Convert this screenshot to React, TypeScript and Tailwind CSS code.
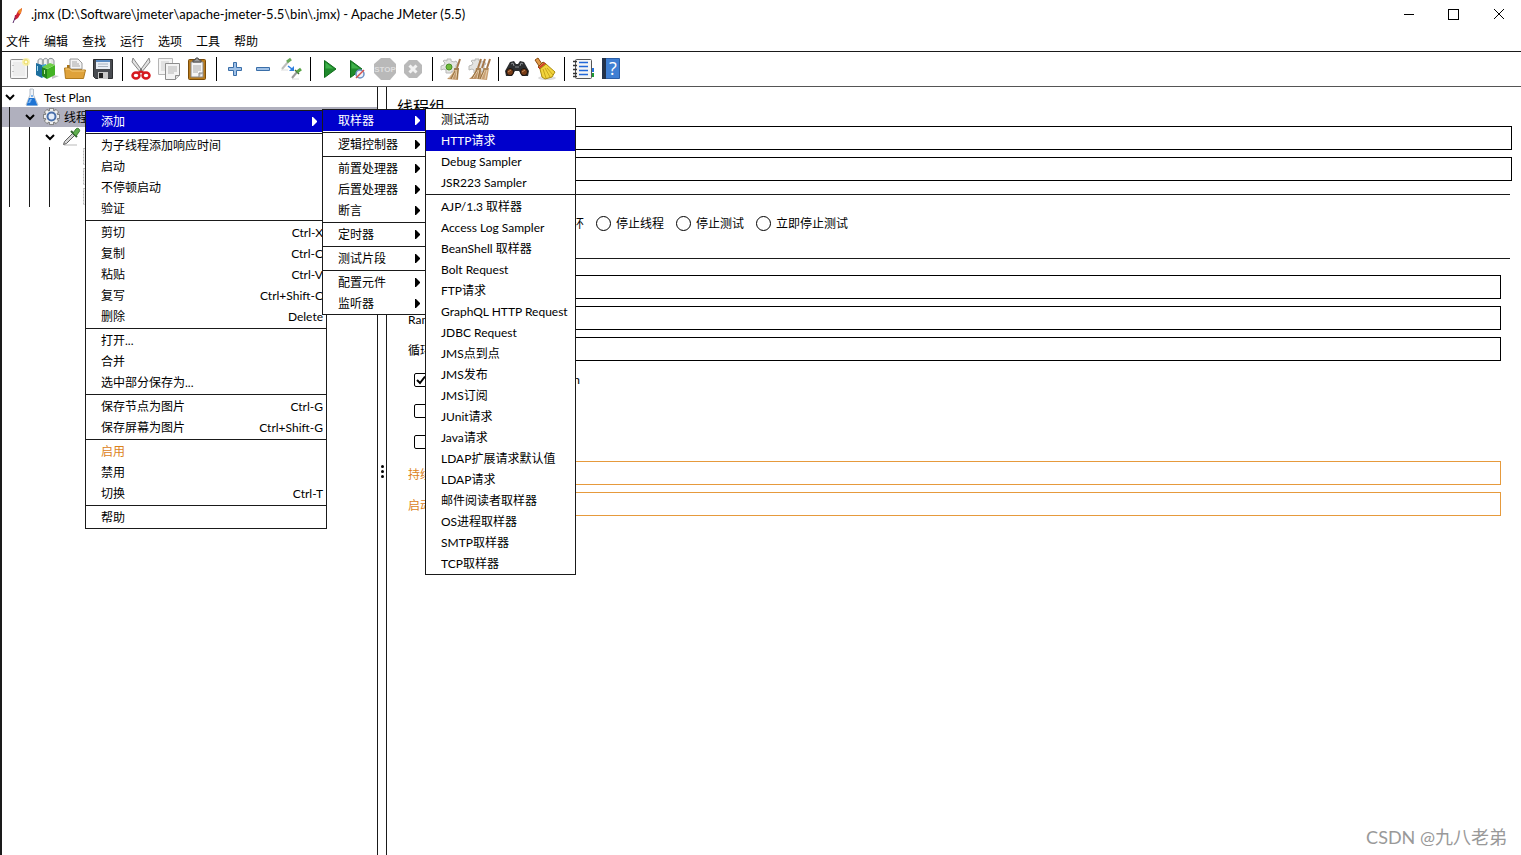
import React from "react";

type Entry = {
  label: string;
  keys?: string;
  sub?: boolean;
  active?: boolean;
  disabled?: boolean;
};

const menuBar = ["文件", "编辑", "查找", "运行", "选项", "工具", "帮助"];

const contextMenu: Entry[][] = [
  [{ label: "添加", sub: true, active: true }],
  [
    { label: "为子线程添加响应时间" },
    { label: "启动" },
    { label: "不停顿启动" },
    { label: "验证" },
  ],
  [
    { label: "剪切", keys: "Ctrl-X" },
    { label: "复制", keys: "Ctrl-C" },
    { label: "粘贴", keys: "Ctrl-V" },
    { label: "复写", keys: "Ctrl+Shift-C" },
    { label: "删除", keys: "Delete" },
  ],
  [{ label: "打开..." }, { label: "合并" }, { label: "选中部分保存为..." }],
  [
    { label: "保存节点为图片", keys: "Ctrl-G" },
    { label: "保存屏幕为图片", keys: "Ctrl+Shift-G" },
  ],
  [{ label: "启用", disabled: true }, { label: "禁用" }, { label: "切换", keys: "Ctrl-T" }],
  [{ label: "帮助" }],
];

const addMenu: Entry[][] = [
  [{ label: "取样器", sub: true, active: true }],
  [{ label: "逻辑控制器", sub: true }],
  [
    { label: "前置处理器", sub: true },
    { label: "后置处理器", sub: true },
    { label: "断言", sub: true },
  ],
  [{ label: "定时器", sub: true }],
  [{ label: "测试片段", sub: true }],
  [
    { label: "配置元件", sub: true },
    { label: "监听器", sub: true },
  ],
];

const samplerMenu: Entry[][] = [
  [
    { label: "测试活动" },
    { label: "HTTP请求", active: true },
    { label: "Debug Sampler" },
    { label: "JSR223 Sampler" },
  ],
  [
    { label: "AJP/1.3 取样器" },
    { label: "Access Log Sampler" },
    { label: "BeanShell 取样器" },
    { label: "Bolt Request" },
    { label: "FTP请求" },
    { label: "GraphQL HTTP Request" },
    { label: "JDBC Request" },
    { label: "JMS点到点" },
    { label: "JMS发布" },
    { label: "JMS订阅" },
    { label: "JUnit请求" },
    { label: "Java请求" },
    { label: "LDAP扩展请求默认值" },
    { label: "LDAP请求" },
    { label: "邮件阅读者取样器" },
    { label: "OS进程取样器" },
    { label: "SMTP取样器" },
    { label: "TCP取样器" },
  ],
];

/* Toolbar icons, all on a 24px grid */

const NewIcon = () => (
  <>
    <rect x="3.5" y="2.5" width="17" height="19" rx="1" fill="#ececec" stroke="#8c8c8c" />
    <path d="M5 4h14v16H5z" fill="none" stroke="#fff" />
    <path d="M6 8v1M6 14v1" stroke="#999" />
    <circle cx="19" cy="5" r="4" fill="#fbf3a0" opacity=".8" />
    <circle cx="19" cy="5" r="2" fill="#fffde0" stroke="#ecd95c" />
  </>
);

const TemplatesIcon = () => (
  <>
    <path d="M3 8V4c0-3 5-3 5 0v4M8 8V4c0-3 5-4 5 0v4M13 8V4c0-4 6-3 6 0v4" fill="#e4e4e4" stroke="#8d9499" />
    <path d="M5 3v4M10 3v4M15 3v4" stroke="#fff" />
    <path d="M1 6l6 2v13l-6-3z" fill="#1d6f9e" />
    <path d="M7 8l4-1v12l-4 2z" fill="#3ba4d8" />
    <path d="M2.500 9v5" stroke="#a9dbf2" />
    <path d="M17 18l7 1-7 3z" fill="#c4c4c4" />
    <path d="M7 10l5 2v10l-5-3z" fill="#23851a" />
    <path d="M12 12l8-4v10l-8 4z" fill="#43b324" />
    <path d="M7 10l8-4 5 2-8 4z" fill="#6fcf48" />
    <path d="M9.500 13v4" stroke="#b8f09c" />
  </>
);

const OpenIcon = () => (
  <>
    <path d="M4 8h15v12H4z" fill="#a87418" />
    <path d="M7 12V2h8l4 4v6z" fill="#f4f4f4" stroke="#9a9a9a" />
    <path d="M9 5h5M9 7h7M9 9h8" stroke="#a6a6a6" />
    <path d="M1.500 11h5l2 2h14l-2 8.500h-18z" fill="#dfa23a" stroke="#b07a1c" />
    <path d="M2.500 12h4l2 2h13" stroke="#f6cd7a" />
  </>
);

const SaveIcon = () => (
  <>
    <path d="M2.500 2.500h19v19h-17l-2-2z" fill="#484b50" stroke="#2b2d30" />
    <path d="M5 3h14v9H5z" fill="#e9eff7" />
    <path d="M5 3h14v2H5z" fill="#5a8cc4" />
    <path d="M7 7h10M7 9.500h10" stroke="#aab4c0" />
    <path d="M7 15h10v7H7z" fill="#c9c9c9" />
    <path d="M8 16h4v5H8z" fill="#222" />
  </>
);

const CutIcon = () => (
  <>
    <path d="M4 1l10 14-2 1L3 5zM20 1L10 15l2 1 9-11z" fill="#e2e2e2" stroke="#858585" />
    <circle cx="12" cy="13" r="1" fill="#666" />
    <ellipse cx="7" cy="18.500" rx="3.500" ry="3" fill="none" stroke="#d61a1f" strokeWidth="2.500" />
    <ellipse cx="17" cy="18.500" rx="3.500" ry="3" fill="none" stroke="#d61a1f" strokeWidth="2.500" />
    <path d="M8 16l4-1.500 4 1.500" fill="none" stroke="#d61a1f" strokeWidth="2" />
  </>
);

const CopyIcon = () => (
  <>
    <path d="M1.500 1.500h14v16h-14z" fill="#f5f5f5" stroke="#b5b5b5" />
    <path d="M4 5h8M4 7h8M4 9h4M4 11h4M4 13h4" stroke="#cdcdcd" />
    <path d="M8.500 6.500h14v12l-4 4h-10z" fill="#f3f3f3" stroke="#8d8d8d" />
    <path d="M11 10h9M11 12h9M11 14h9M11 16h6" stroke="#b5b5b5" />
    <path d="M18.500 22.500v-4h4" fill="#ddd" stroke="#8d8d8d" />
  </>
);

const PasteIcon = () => (
  <>
    <rect x="3.500" y="2.500" width="17" height="20" rx="1" fill="#b87a1c" stroke="#7a4c08" />
    <path d="M6 5h12v15H6z" fill="#f5f5f5" stroke="#8a8a8a" />
    <path d="M8 9h8M8 11h8M8 13h8M8 15h5" stroke="#aaa" />
    <path d="M14 20v-4h4" fill="#ccc" stroke="#888" />
    <path d="M8 5V3h2l1-2h2l1 2h2v2z" fill="#9a9a9a" stroke="#4b4b4b" />
  </>
);

const PlusIcon = () => (
  <path d="M10.500 5.500h3v5h5v3h-5v5h-3v-5h-5v-3h5z" fill="#9fc0e6" stroke="#3a6ea8" />
);

const MinusIcon = () => <path d="M5.500 10.500h13v3h-13z" fill="#9fc0e6" stroke="#3a6ea8" />;

const ToggleIcon = () => (
  <>
    <path d="M2 13h7M13 22h7" stroke="#dedede" />
    <path d="M3 12l6-7" stroke="#bdbdbd" strokeWidth="2" />
    <path d="M8 5l4-3" stroke="#6aa85c" strokeWidth="3" />
    <path d="M9 9l4 3" stroke="#2f7fe0" strokeWidth="1.500" />
    <path d="M15 9v5h-5z" fill="#2f7fe0" />
    <path d="M13 21l5-6" stroke="#9b9b9b" strokeWidth="2" />
    <path d="M16 13l4 4" stroke="#3b6b35" strokeWidth="1.500" />
    <path d="M18 15l4-3" stroke="#57a345" strokeWidth="3" />
  </>
);

const RunIcon = () => (
  <>
    <path d="M7.500 3.500L19 12 7.500 20.500z" fill="#1f8a2c" stroke="#0f6d1a" />
    <path d="M8.500 5.500l8 6h-8z" fill="#4cc257" opacity=".7" />
  </>
);

const RunNoTimerIcon = () => (
  <>
    <path d="M5.500 3.500L17 12 5.500 20.500z" fill="#1f8a2c" stroke="#0f6d1a" />
    <path d="M6.500 5.500l8 6h-8z" fill="#4cc257" opacity=".7" />
    <circle cx="15" cy="17" r="4" fill="#eef2fa" stroke="#6b8fc4" strokeWidth="1.500" />
    <path d="M11 21l8-8" stroke="#d8534c" strokeWidth="1.500" />
  </>
);

const StopIcon = () => (
  <>
    <path d="M8 1h9l6 6v9l-6 7H8l-7-7V7z" fill="#b9b9b9" />
    <text x="12" y="15" textAnchor="middle" className="fill-[#dedede] font-['Liberation_Sans'] text-[8px] font-bold">
      STOP
    </text>
  </>
);

const ShutdownIcon = () => (
  <>
    <path d="M8 3h8l5 5v8l-5 5H8l-5-5V8z" fill="#b9b9b9" />
    <path d="M8.500 8.500l7 7M15.500 8.500l-7 7" stroke="#f2f2f2" strokeWidth="3" />
  </>
);

const Cog = () => (
  <path
    d="M8 2h4v2l3 1 2-1 2 3-2 1v4l-2 3-2-1-1 2H7v-3l-2-1-3 1V9l3-1 1-2-2-2 2-1 2 1z"
    fill="#e4e4e2"
    stroke="#b9b9b7"
  />
);

const ClearIcon = () => (
  <>
    <Cog />
    <circle cx="10" cy="10" r="3" fill="#6fbb3c" stroke="#4a8f28" />
    <path d="M21 2l-3 9" stroke="#a5784c" strokeWidth="2" />
    <path d="M15.500 11h4.500l-1 12-11-1c4-3 6-6 7.500-11z" fill="#c49a6c" />
    <path d="M15 12h5" stroke="#7d5a30" />
    <path d="M17 13l-4 9M18 13l-1 9M15 14l-5 7" stroke="#e6cfac" />
    <path d="M16 14l-4 8M19 13l-1 9" stroke="#94703f" />
  </>
);

const ClearAllIcon = () => (
  <>
    <Cog />
    <path d="M14 2l-3 9M18 2l-3 9M23 2l-3 9" stroke="#a5784c" strokeWidth="2" />
    <path d="M9 11h5l1 11H2c4-3 6-6 7-11z" fill="#bf9468" />
    <path d="M17 11h5l-2 12-10-1c4-3 6-6 7-11z" fill="#c9a074" />
    <path d="M11 13l-5 8M12 13l-2 9M18 13l-4 9M20 13l-2 9" stroke="#e6cfac" />
    <path d="M10 13l-5 8M13 13l-2 9M17 13l-4 9M9 12h5M16 12h5" stroke="#94703f" />
  </>
);

const SearchIcon = () => (
  <>
    <path d="M5 5l4-1 2 3h2l2-3 4 1 5 9-1 5h-6l-3-5h-4l-3 5H1l-1-5z" fill="#2c2e30" />
    <path d="M6 7l2-1 1 3M18 7l-2-1-1 3" fill="none" stroke="#8c9094" />
    <circle cx="5" cy="15" r="3.500" fill="#7a3d16" stroke="#111" />
    <circle cx="19" cy="15" r="3.500" fill="#7a3d16" stroke="#111" />
    <path d="M10 10h4" stroke="#8c9094" />
    <path d="M3 15l3-2M17 15l3-2" stroke="#c58a5c" />
  </>
);

const BroomIcon = () => (
  <>
    <ellipse cx="14" cy="21" rx="9" ry="2" fill="#ddd" />
    <path d="M2 3l3-2 4 6-3 2z" fill="#e09a4a" stroke="#8d4d10" />
    <path d="M5 10l5-5 3 2-6 5z" fill="#d98a3a" stroke="#8d4d10" />
    <path d="M6 11l6-5" stroke="#d4352a" strokeWidth="1.500" />
    <path d="M7 12l6-5 9 8-3 5-7 2-3-2z" fill="#f2d43c" stroke="#a98a10" />
    <path d="M10 12l3 9M12 11l5 9M14 11l6 7" stroke="#c7a51c" fill="none" />
  </>
);

const FunctionIcon = () => (
  <>
    <path d="M20 11h3v4h-3z" fill="#2472dd" />
    <path d="M20 16h3v4h-3z" fill="#1d9a32" />
    <rect x="4.500" y="2.500" width="16" height="19" rx="1" fill="#f6f6f6" stroke="#555" />
    <path d="M8 5.500h9M8 9.500h9M8 13.500h9M8 17.500h9" stroke="#2368d8" strokeWidth="1.500" />
    <path d="M2 4.500h4M2 8.500h4M2 12.500h4M2 16.500h4M2 19.500h4" stroke="#333" strokeWidth="1.500" />
  </>
);

const HelpIcon = () => (
  <>
    <path d="M3.500 1.500h17v20h-17z" fill="#3f7fd3" stroke="#2b5ea6" />
    <path d="M3 1h4v21H3z" fill="#23324a" />
    <text x="14" y="18" textAnchor="middle" className="fill-white font-['Open_Sans'] text-[18px]">
      ?
    </text>
  </>
);

const toolbar = [
  [
    { name: "新建", Icon: NewIcon },
    { name: "模板", Icon: TemplatesIcon },
    { name: "打开", Icon: OpenIcon },
    { name: "保存", Icon: SaveIcon },
  ],
  [
    { name: "剪切", Icon: CutIcon },
    { name: "复制", Icon: CopyIcon },
    { name: "粘贴", Icon: PasteIcon },
  ],
  [
    { name: "全部展开", Icon: PlusIcon },
    { name: "全部折叠", Icon: MinusIcon },
    { name: "切换", Icon: ToggleIcon },
  ],
  [
    { name: "启动", Icon: RunIcon },
    { name: "不停顿启动", Icon: RunNoTimerIcon },
    { name: "停止", Icon: StopIcon },
    { name: "关闭", Icon: ShutdownIcon },
  ],
  [
    { name: "清除", Icon: ClearIcon },
    { name: "清除全部", Icon: ClearAllIcon },
  ],
  [
    { name: "查找", Icon: SearchIcon },
    { name: "重置查找", Icon: BroomIcon },
  ],
  [
    { name: "函数助手", Icon: FunctionIcon },
    { name: "帮助", Icon: HelpIcon },
  ],
];

/* Tree icons, 20px */

const Flask = () => (
  <svg className="size-5" viewBox="0 0 20 20" fill="none">
    <path d="M8 2h3M8 2v6L4 18h12L11.500 8V2" fill="#eef3f8" stroke="#b5bfca" />
    <path d="M7 11h5.500l3 7.500h-11z" fill="#1f74d4" />
    <path d="M8 12h2l-2 4H6z" fill="#7bb6f2" />
    <circle cx="10" cy="9" r="1" fill="#5aa0e8" />
  </svg>
);

const Gear = () => (
  <svg className="size-5" viewBox="0 0 20 20" fill="none">
    <g stroke="#858585" strokeWidth="5">
      <path d="M9.500 1v17M1 9.500h17M3.500 3.500l12 12M15.500 3.500l-12 12" />
    </g>
    <g stroke="#f0f0f0" strokeWidth="3">
      <path d="M9.500 2v15M2 9.500h15M4 4l11 11M15 4L4 15" />
    </g>
    <circle cx="9.500" cy="9.500" r="6" fill="#f0f0f0" />
    <circle cx="9.500" cy="9.500" r="4" fill="#e6eefa" stroke="#4a70ab" strokeWidth="2" />
  </svg>
);

const Pipette = () => (
  <svg className="size-5" viewBox="0 0 20 20" fill="none">
    <path d="M2 18h13" stroke="#dcdcdc" strokeWidth="2" />
    <path d="M1.500 17.500l1-3 8-8 2 2-8 8z" fill="#d4d4d4" stroke="#5d5d5d" />
    <path d="M9 4l6 6" stroke="#2f5f2f" strokeWidth="2" />
    <path d="M11 6l3-4c2-2 5 1 3 3l-3 4z" fill="#5fae4e" stroke="#3a7a30" />
  </svg>
);

const FadedNode = () => (
  <svg className="size-5" viewBox="0 0 20 20" fill="none">
    <rect x="1.500" y="1.500" width="16" height="16" fill="#f2f2f2" stroke="#b5b5b5" strokeDasharray="2 1" />
  </svg>
);

const Chevron = () => (
  <svg className="size-4" viewBox="0 0 16 16" fill="none">
    <path d="M4 6l4 4 4-4" stroke="#000" strokeWidth="2" />
  </svg>
);

function TreeRow({
  depth,
  label,
  icon,
  leaf,
  selected,
}: {
  depth: number;
  label?: string;
  icon: React.ReactNode;
  leaf?: boolean;
  selected?: boolean;
}) {
  return (
    <li className={selected ? "flex h-5 items-center bg-[#b0b0be]" : "flex h-5 items-center"}>
      {Array.from({ length: depth }, (_, i) => (
        <span key={i} className="h-5 w-5 shrink-0 pl-[7px]">
          <span className="block h-5 w-px bg-[#1a1a1a]" />
        </span>
      ))}
      <span className="mr-1 w-4 shrink-0">{!leaf && <Chevron />}</span>
      <span className="mr-0.5 shrink-0">{icon}</span>
      {label && <span className="pt-0.5">{label}</span>}
    </li>
  );
}

function Popup({ groups }: { groups: Entry[][] }) {
  return (
    <div role="menu" className="border border-[#1a1a1a] bg-white">
      {groups.map((group, g) => (
        <div key={g}>
          {g > 0 && <hr className="my-px border-t border-[#1a1a1a]" />}
          {group.map((entry) => (
            <button
              key={entry.label}
              role="menuitem"
              disabled={entry.disabled}
              className={
                "flex h-[21px] w-full items-center justify-between pt-px pr-[3px] pl-[15px] whitespace-nowrap " +
                (entry.active ? "bg-[#0000cc] text-white" : entry.disabled ? "text-[#dc821a]" : "text-black")
              }
            >
              <span>{entry.label}</span>
              {entry.keys && <span>{entry.keys}</span>}
              {entry.sub && (
                <svg className="mr-1.5 mb-0.5 h-[9px] w-[5px]" viewBox="0 0 5 9" fill="currentColor">
                  <path d="M0 0h1l4 4v1L1 9H0z" />
                </svg>
              )}
            </button>
          ))}
        </div>
      ))}
    </div>
  );
}

function Field({ id, label, name, disabled }: { id: string; label?: string; name?: string; disabled?: boolean }) {
  return (
    <div className="flex h-6 items-center">
      <label
        htmlFor={id}
        className={"w-28 shrink-0 overflow-hidden pt-1 whitespace-nowrap " + (disabled ? "text-[#dc821a]" : "")}
      >
        {label}
      </label>
      <input
        id={id}
        type="text"
        aria-label={name}
        disabled={disabled}
        className={
          "h-6 min-w-0 flex-1 border bg-white px-1 outline-none " +
          (disabled ? "border-[#e69a3c]" : "border-black")
        }
      />
    </div>
  );
}

function Check({ label, name, checked }: { label?: string; name?: string; checked?: boolean }) {
  return (
    <label className="ml-1.5 flex h-6 items-center gap-1.5">
      <span className="grid">
        <input
          type="checkbox"
          aria-label={name}
          defaultChecked={checked}
          className="size-3.5 appearance-none rounded-xs border border-black bg-white [grid-area:1/1]"
        />
        {checked && (
          <svg className="size-3.5 [grid-area:1/1]" viewBox="0 0 14 14" fill="none">
            <path d="M3 7l3 3 5-6.500" stroke="#000" strokeWidth="2" />
          </svg>
        )}
      </span>
      {label}
    </label>
  );
}

const errorActions = ["启动下一进程循环", "停止线程", "停止测试", "立即停止测试"];

export default function App() {
  return (
    <div className="relative flex min-h-screen flex-col overflow-hidden border-l-2 border-[#1a1a1a] bg-white font-[Lato,'Noto_Sans_CJK_SC',sans-serif] text-xs text-black">
      {/* Title bar */}
      <header className="flex h-[30px] items-start pl-2">
        <svg className="mr-1 size-4 self-center" viewBox="0 0 16 16" fill="none">
          <path d="M5 13l1-5 2-4 4-3-1 5-3 5z" fill="#d3222b" />
          <path d="M8 5l1-2 3-2-1 5-2 1z" fill="#ef8a25" />
          <path d="M5 8l-1 5 2-1 1-4z" fill="#b3204a" />
          <path d="M3 16l2-5" stroke="#5a2a6a" />
        </svg>
        <h1 className="flex-1 self-center pl-px text-[13px]">
          .jmx (D:\Software\jmeter\apache-jmeter-5.5\bin\.jmx) - Apache JMeter (5.5)
        </h1>
        <button aria-label="最小化" className="flex h-7 w-[45px] items-center justify-center">
          <span className="h-px w-2.5 bg-black" />
        </button>
        <button aria-label="最大化" className="flex h-7 w-[45px] items-center justify-center">
          <span className="size-[11px] border border-black" />
        </button>
        <button aria-label="关闭" className="flex h-7 w-[45px] items-center justify-center">
          <svg className="size-3" viewBox="0 0 12 12" stroke="#000">
            <path d="M1 1l10 10M11 1L1 11" />
          </svg>
        </button>
      </header>

      {/* Menu bar */}
      <nav className="flex h-[22px] items-center gap-3.5 border-b border-[#1a1a1a] pt-0.5 pl-1">
        {menuBar.map((item) => (
          <button key={item}>{item}</button>
        ))}
      </nav>

      {/* Toolbar */}
      <div className="flex h-[35px] items-center border-b border-[#555] pl-[3px]">
        {toolbar.map((group, g) => (
          <React.Fragment key={g}>
            {g > 0 && <span className="mr-1 ml-[5px] h-6 w-px bg-black" />}
            {group.map(({ name, Icon }) => (
              <button key={name} aria-label={name} className="flex w-7 justify-center">
                <svg className="size-6" viewBox="0 0 24 24" fill="none">
                  <Icon />
                </svg>
              </button>
            ))}
          </React.Fragment>
        ))}
      </div>

      <div className="flex flex-1">
        <ul className="w-[375px] shrink-0">
          <TreeRow depth={0} label="Test Plan" icon={<Flask />} />
          <TreeRow depth={1} label="线程组" icon={<Gear />} selected />
          <TreeRow depth={2} icon={<Pipette />} />
          <TreeRow depth={3} icon={<FadedNode />} leaf />
          <TreeRow depth={3} icon={<FadedNode />} leaf />
          <TreeRow depth={3} icon={<FadedNode />} leaf />
        </ul>

        {/* Split pane handle */}
        <div className="flex w-2.5 shrink-0 flex-col items-center justify-center gap-0.5 border-x border-[#1a1a1a]">
          <span className="size-[3px] rounded-full bg-black" />
          <span className="size-[3px] rounded-full bg-black" />
          <span className="size-[3px] rounded-full bg-black" />
        </div>

        <main className="min-w-0 flex-1 pr-[9px] pl-2.5">
          <h2 className="h-[39px] pt-2 text-base leading-6">线程组</h2>
          <div className="flex flex-col gap-[7px]">
            <Field id="name" name="名称" />
            <Field id="comments" name="注释" />
          </div>

          <hr className="mt-[13px] mr-0.5 border-t border-[#1a1a1a]" />
          <div role="radiogroup" className="flex h-[63px] items-center gap-3 pb-1.5 pl-[71px]">
            {errorActions.map((label) => (
              <label key={label} className="flex items-center gap-[5px] whitespace-nowrap">
                <input
                  type="radio"
                  name="on-error"
                  className="size-[15px] appearance-none rounded-full border border-black bg-white"
                />
                {label}
              </label>
            ))}
          </div>

          <hr className="mr-0.5 border-t border-[#1a1a1a]" />
          <div className="flex flex-col gap-[7px] px-[11px] pt-4">
            <Field id="threads" name="线程数" />
            <Field id="ramp" label="Ramp-Up" />
            <Field id="loops" label="循环次数" />
            <Check label="Same user on each iteration" checked />
            <Check name="延迟创建线程直到需要" />
            <Check name="调度器" />
            <Field id="duration" label="持续时间（秒）" disabled />
            <Field id="delay" label="启动延迟（秒）" disabled />
          </div>
        </main>
      </div>

      {/* Open context menus */}
      <div className="absolute top-[110px] left-[83px] w-[242px]">
        <Popup groups={contextMenu} />
      </div>
      <div className="absolute top-[109px] left-[320px] w-[108px]">
        <Popup groups={addMenu} />
      </div>
      <div className="absolute top-[108px] left-[423px] w-[151px]">
        <Popup groups={samplerMenu} />
      </div>

      <p className="absolute right-3.5 bottom-1.5 text-lg leading-6 text-[#999]">CSDN @九八老弟</p>
    </div>
  );
}
